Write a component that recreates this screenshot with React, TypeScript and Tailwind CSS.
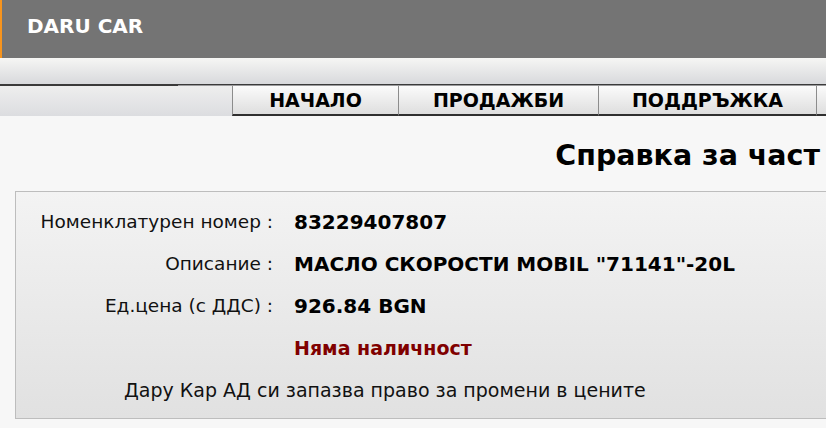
import React from "react";

const tabs = [
	{ label: "НАЧАЛО", w: "w-[166px]" },
	{ label: "ПРОДАЖБИ", w: "w-[200px]" },
	{ label: "ПОДДРЪЖКА", w: "w-[218px]" },
	{ label: "", w: "w-[60px]" },
];

function Row({
	label,
	children,
}: {
	label: string;
	children: React.ReactNode;
}) {
	return (
		<div className="flex h-[42px] items-center">
			<div className="w-[257px] shrink-0 text-right text-[18.5px] text-[#111]">
				{label}
			</div>
			<div className="pl-[21px] text-[20px] font-bold text-black">
				{children}
			</div>
		</div>
	);
}

export default function App() {
	return (
		<div className="w-[826px] h-[428px] overflow-hidden bg-[#f7f7f7] font-['DejaVu_Sans',sans-serif]">
			{/* header */}
			<div className="h-[58px] bg-[#747474] border-l-2 border-[#f7941d] pl-[25px] pt-[15px]">
				<span className="text-[20px] leading-[23px] font-bold text-white">
					DARU CAR
				</span>
			</div>

			{/* menu band */}
			<div className="h-[26px] bg-gradient-to-b from-[#f6f6f4] to-[#d8d9dc]" />
			<div className="flex h-[2px]">
				<div className="w-[178px] bg-[#3a3a3a]" />
				<div className="flex-1 flex flex-col">
					<div className="h-px bg-[#3a3a3a]" />
					<div className="h-px bg-[#9a9a9c]" />
				</div>
			</div>
			<div className="flex h-[30px] pl-[232px] bg-gradient-to-b from-[#eeeeee] to-[#dcdde0]">
				{tabs.map((t) => (
					<div
						key={t.w}
						className={`${t.w} shrink-0 flex items-center justify-center border-l border-[#8c8c8c] border-b-2 border-b-[#2f2f2f] bg-gradient-to-b from-[#fbfbfb] to-[#dedede] text-[19px] font-bold text-black`}
					>
						{t.label}
					</div>
				))}
			</div>

			{/* content */}
			<div className="pt-[23px] pr-[6px] text-right text-[28.5px] leading-[33px] font-bold text-black">
				Справка за част
			</div>

			<div className="mt-[19px] ml-[15px] w-[830px] border border-r-0 border-[#bdbdbd] bg-gradient-to-b from-[#f3f3f3] to-[#e1e1e1] pt-[9px] pb-[7px]">
				<Row label="Номенклатурен номер :">83229407807</Row>
				<Row label="Описание :">МАСЛО СКОРОСТИ MOBIL "71141"-20L</Row>
				<Row label="Ед.цена (с ДДС) :">926.84 BGN</Row>
				<Row label="">
					<span className="text-[19px] text-[#800000]">Няма наличност</span>
				</Row>
				<div className="flex h-[42px] items-center pl-[108px] text-[19px] text-[#111]">
					Дару Кар АД си запазва право за промени в цените
				</div>
			</div>
		</div>
	);
}
